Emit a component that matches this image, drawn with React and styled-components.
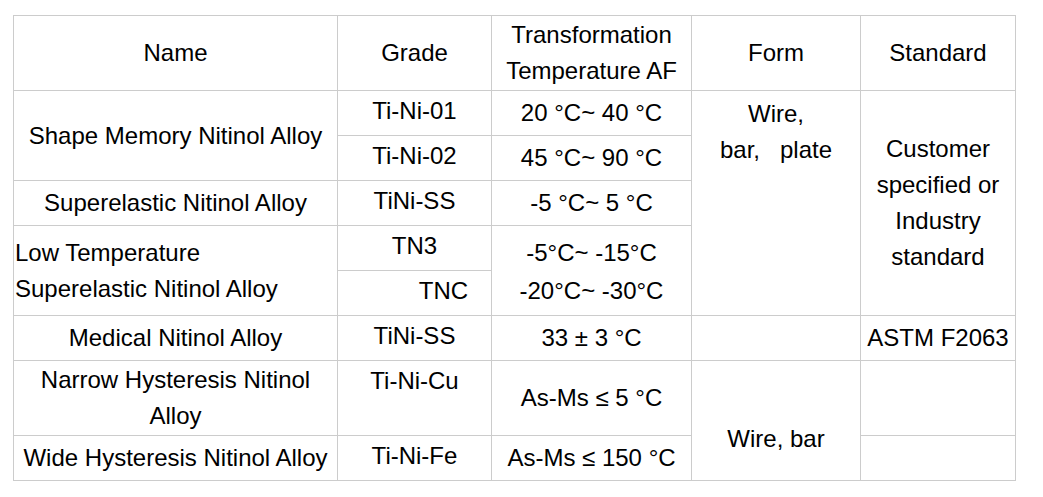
import styled, { createGlobalStyle } from 'styled-components';

const GlobalStyle = createGlobalStyle`
  html, body {
    margin: 0;
    padding: 0;
    background: #ffffff;
  }
  body {
    font-family: "Liberation Sans", Arial, sans-serif;
    color: #000000;
  }
`;

const Page = styled.div`
  padding: 15px 0 0 13px;
`;

const Table = styled.table`
  border-collapse: collapse;
  table-layout: fixed;
  width: 1002px;
  font-size: 24px;
  line-height: 36px;
`;

const Row = styled.tr`
  height: ${p => p.$h || 45}px;
`;

const HeadCell = styled.th`
  border: 1px solid #cccccc;
  padding: 0;
  font-weight: normal;
  text-align: center;
  vertical-align: middle;
`;

const Cell = styled.td`
  border: 1px solid #cccccc;
  padding: ${p => p.$pt || 0}px 0 0 ${p => p.$pl || 0}px;
  text-align: ${p => p.$align || 'center'};
  vertical-align: ${p => p.$valign || 'middle'};
  line-height: ${p => p.$lh || 36}px;
`;

const widths = [324, 154, 200, 169, 155];

export default function App() {
  return (
    <>
      <GlobalStyle />
      <Page>
        <Table>
          <colgroup>
            {widths.map((w, i) => <col key={i} style={{ width: w }} />)}
          </colgroup>
          <thead>
            <Row $h={75}>
              <HeadCell>Name</HeadCell>
              <HeadCell>Grade</HeadCell>
              <HeadCell>Transformation<br />Temperature AF</HeadCell>
              <HeadCell>Form</HeadCell>
              <HeadCell>Standard</HeadCell>
            </Row>
          </thead>
          <tbody>
            <Row>
              <Cell rowSpan={2}>Shape Memory Nitinol Alloy</Cell>
              <Cell $valign="top" $pt={2}>Ti-Ni-01</Cell>
              <Cell>20 °C~ 40 °C</Cell>
              <Cell rowSpan={5} $valign="top" $pt={5}>Wire,<br />bar,&nbsp;&nbsp; plate</Cell>
              <Cell rowSpan={5}>Customer<br />specified or<br />Industry<br />standard</Cell>
            </Row>
            <Row>
              <Cell $valign="top" $pt={2}>Ti-Ni-02</Cell>
              <Cell>45 °C~ 90 °C</Cell>
            </Row>
            <Row>
              <Cell>Superelastic Nitinol Alloy</Cell>
              <Cell $valign="top" $pt={2}>TiNi-SS</Cell>
              <Cell>-5 °C~ 5 °C</Cell>
            </Row>
            <Row>
              <Cell rowSpan={2} $align="left" $pl={1}>Low Temperature<br />Superelastic Nitinol Alloy</Cell>
              <Cell $valign="top" $pt={2}>TN3</Cell>
              <Cell rowSpan={2} $lh={38} $pt={2}>-5°C~ -15°C<br />-20°C~ -30°C</Cell>
            </Row>
            <Row>
              <Cell $valign="top" $pt={2} $pl={58}>TNC</Cell>
            </Row>
            <Row>
              <Cell>Medical Nitinol Alloy</Cell>
              <Cell $valign="top" $pt={2}>TiNi-SS</Cell>
              <Cell>33 ± 3 °C</Cell>
              <Cell />
              <Cell>ASTM F2063</Cell>
            </Row>
            <Row $h={75}>
              <Cell>Narrow Hysteresis Nitinol<br />Alloy</Cell>
              <Cell $valign="top" $pt={2}>Ti-Ni-Cu</Cell>
              <Cell>As-Ms ≤ 5 °C</Cell>
              <Cell rowSpan={2} $valign="top" $pt={60}>Wire, bar</Cell>
              <Cell />
            </Row>
            <Row>
              <Cell>Wide Hysteresis Nitinol Alloy</Cell>
              <Cell $valign="top" $pt={2}>Ti-Ni-Fe</Cell>
              <Cell>As-Ms ≤ 150 °C</Cell>
              <Cell />
            </Row>
          </tbody>
        </Table>
      </Page>
    </>
  );
}
